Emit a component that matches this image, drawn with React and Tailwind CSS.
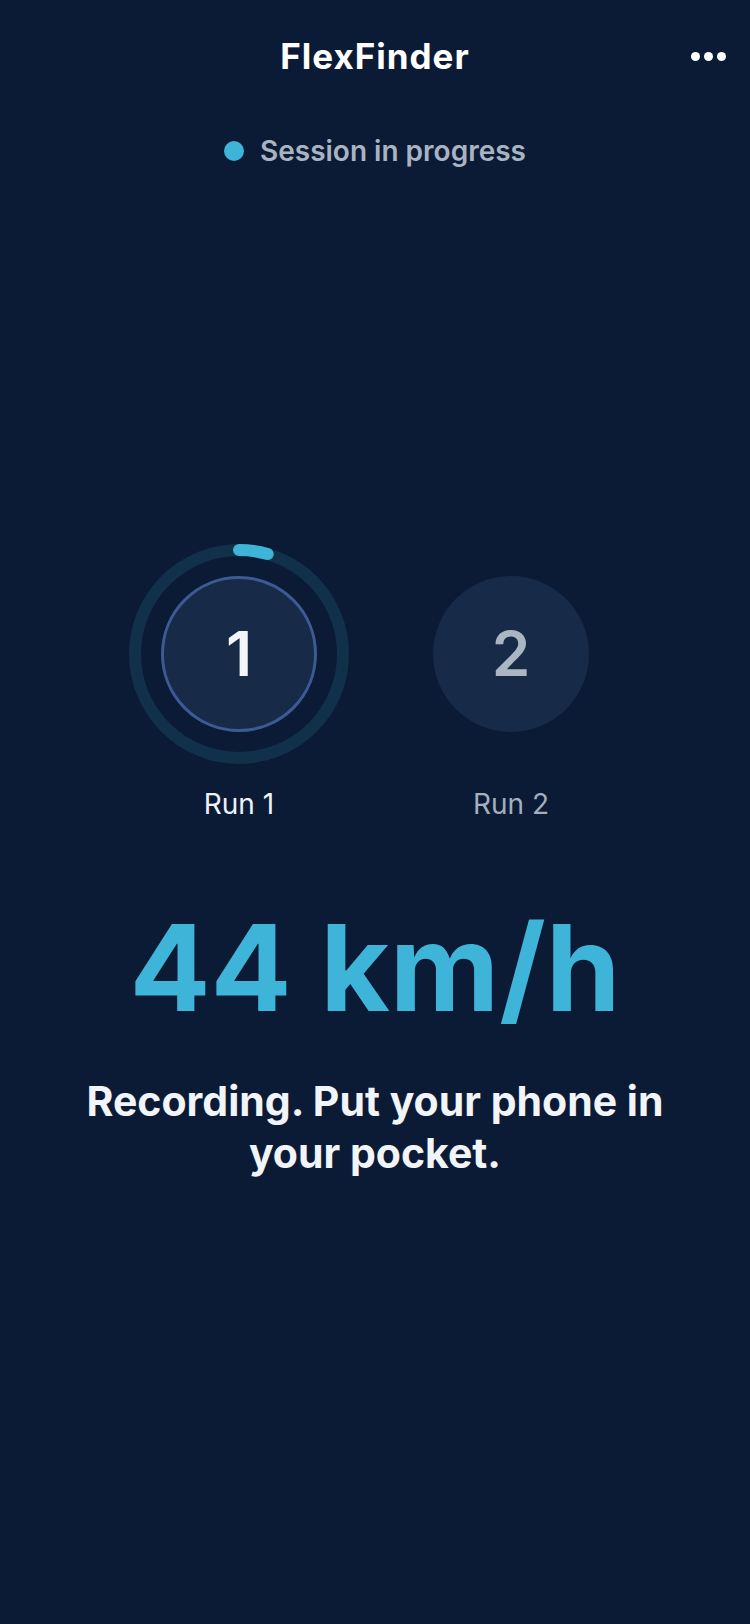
import React from "react";

function ProgressRing() {
  const r = 104;
  const c = 2 * Math.PI * r;
  const arc = (16 / 360) * c;
  return (
    <svg width="220" height="220" viewBox="0 0 220 220" className="absolute inset-0">
      <circle cx="110" cy="110" r={r} fill="none" stroke="#11304a" strokeWidth="12" />
      <circle
        cx="110"
        cy="110"
        r={r}
        fill="none"
        stroke="#3fb4d9"
        strokeWidth="12"
        strokeLinecap="round"
        strokeDasharray={`${arc} ${c}`}
        transform="rotate(-90 110 110)"
      />
    </svg>
  );
}

export default function App() {
  return (
    <div className="min-h-[1624px] w-[750px] bg-[#0b1b35] flex flex-col items-center">
      {/* Header */}
      <div className="w-full h-[112px] grid grid-cols-[1fr_auto_1fr] items-center px-[24px]">
        <div />
        <div
          className="text-white text-[35px] leading-none font-bold tracking-[1px]"
          style={{ fontFamily: "Inter, 'Noto Sans', sans-serif" }}
        >
          FlexFinder
        </div>
        <div className="flex justify-end">
          <div className="flex gap-[4px] items-center">
            <span className="w-[9px] h-[9px] rounded-full bg-white" />
            <span className="w-[9px] h-[9px] rounded-full bg-white" />
            <span className="w-[9px] h-[9px] rounded-full bg-white" />
          </div>
        </div>
      </div>

      {/* Session status */}
      <div className="mt-[23px] h-[32px] flex items-center gap-[16px]">
        <span className="w-[20px] h-[20px] rounded-full bg-[#3fb4d9]" />
        <span
          className="text-[28px] leading-[32px] font-semibold text-[#a9b4c2]"
          style={{ fontFamily: "Inter, 'Noto Sans', sans-serif" }}
        >
          Session in progress
        </span>
      </div>

      {/* Runs */}
      <div className="mt-[377px] flex justify-center gap-[52px]">
        <div className="w-[220px] flex flex-col items-center">
          <div className="relative w-[220px] h-[220px] flex items-center justify-center">
            <ProgressRing />
            <div className="relative w-[156px] h-[156px] rounded-full bg-[#172a48] border-[3px] border-[#3e5a94] flex items-center justify-center">
              <span
                className="text-[62px] leading-none font-semibold text-[#f4f6fa]"
                style={{ fontFamily: "Inter, 'Noto Sans', sans-serif" }}
              >
                1
              </span>
            </div>
          </div>
          <div
            className="mt-[22px] text-[28px] leading-[36px] text-[#eef2f7]"
            style={{ fontFamily: "Inter, 'Noto Sans', sans-serif" }}
          >
            Run 1
          </div>
        </div>
        <div className="w-[220px] flex flex-col items-center">
          <div className="w-[220px] h-[220px] flex items-center justify-center">
            <div className="w-[156px] h-[156px] rounded-full bg-[#172a48] flex items-center justify-center">
              <span
                className="text-[62px] leading-none font-semibold text-[#aab6c2]"
                style={{ fontFamily: "Inter, 'Noto Sans', sans-serif" }}
              >
                2
              </span>
            </div>
          </div>
          <div
            className="mt-[22px] text-[28px] leading-[36px] text-[#a3afbd]"
            style={{ fontFamily: "Inter, 'Noto Sans', sans-serif" }}
          >
            Run 2
          </div>
        </div>
      </div>

      {/* Speed */}
      <div
        className="mt-[86px] text-[120px] leading-none font-bold text-[#3fb4d9]"
        style={{ fontFamily: "Inter, 'Noto Sans', sans-serif" }}
      >
        44 km/h
      </div>

      {/* Instruction */}
      <div
        className="mt-[47px] w-[660px] text-center text-[41px] leading-[52px] font-bold text-[#f1f4f8]"
        style={{ fontFamily: "Inter, 'Noto Sans', sans-serif" }}
      >
        Recording. Put your phone in your pocket.
      </div>
    </div>
  );
}
